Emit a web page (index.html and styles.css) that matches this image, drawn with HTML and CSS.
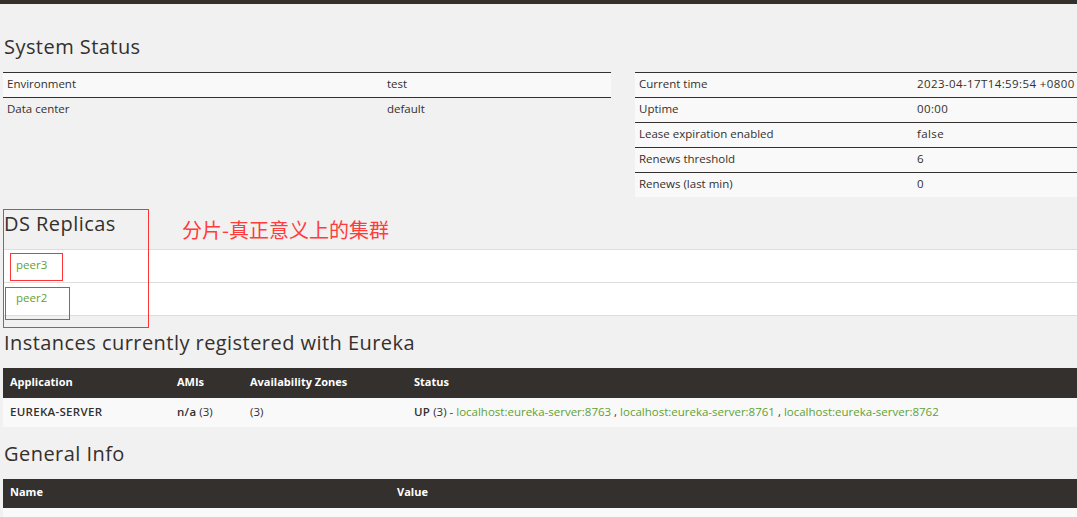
FILE: index.html
```html
<!DOCTYPE html>
<html lang="en">
<head>
<meta charset="utf-8">
<title>Eureka</title>
<link rel="stylesheet" href="styles.css">
</head>
<body>
<div class="topbar"></div>
<main class="page">
  <h2 class="heading heading-system">System Status</h2>
  <div class="status-grid">
    <table class="kv kv-left">
      <colgroup><col class="kv-left-key"><col></colgroup>
      <tbody>
        <tr><td>Environment</td><td>test</td></tr>
        <tr><td>Data center</td><td>default</td></tr>
      </tbody>
    </table>
    <table class="kv kv-right">
      <colgroup><col class="kv-right-key"><col></colgroup>
      <tbody>
        <tr><td>Current time</td><td>2023-04-17T14:59:54 +0800</td></tr>
        <tr><td>Uptime</td><td>00:00</td></tr>
        <tr><td>Lease expiration enabled</td><td>false</td></tr>
        <tr><td>Renews threshold</td><td>6</td></tr>
        <tr><td>Renews (last min)</td><td>0</td></tr>
      </tbody>
    </table>
  </div>

  <section class="replicas">
    <div class="replicas-head">
      <h2 class="heading">DS Replicas</h2>
      <span class="note">分片-真正意义上的集群</span>
    </div>
    <ul class="replica-list">
      <li><a href="#">peer3</a></li>
      <li><a href="#">peer2</a></li>
    </ul>
    <span class="mark mark-section"></span>
    <span class="mark mark-peer3"></span>
    <span class="mark mark-peer2"></span>
  </section>

  <h2 class="heading heading-instances">Instances currently registered with Eureka</h2>
  <table class="data data-instances">
    <colgroup><col class="c-app"><col class="c-ami"><col class="c-az"><col></colgroup>
    <thead>
      <tr><th>Application</th><th>AMIs</th><th>Availability Zones</th><th>Status</th></tr>
    </thead>
    <tbody>
      <tr>
        <td><b>EUREKA-SERVER</b></td>
        <td><b>n/a</b> (3)</td>
        <td>(3)</td>
        <td><b>UP</b> (3) - <a href="#">localhost:eureka-server:8763</a> , <a href="#">localhost:eureka-server:8761</a> , <a href="#">localhost:eureka-server:8762</a></td>
      </tr>
    </tbody>
  </table>

  <h2 class="heading heading-general">General Info</h2>
  <table class="data data-general">
    <colgroup><col class="c-name"><col></colgroup>
    <thead>
      <tr><th>Name</th><th>Value</th></tr>
    </thead>
    <tbody>
      <tr class="empty-row"><td></td><td></td></tr>
    </tbody>
  </table>
</main>
</body>
</html>
```
FILE: styles.css
```css
html, body {
  margin: 0;
}

body {
  background: #f1f1f1;
  color: #34302d;
  font-family: "Open Sans", "Noto Sans", sans-serif;
  font-size: 11.5px;
  overflow: hidden;
}

.topbar {
  height: 4px;
  background: #34302d;
}

.page {
  padding-left: 3px;
}

.heading {
  margin: 0;
  padding-left: 1px;
  font-family: "Open Sans", "Noto Sans", sans-serif;
  font-weight: 400;
  font-size: 20px;
  line-height: 24px;
  letter-spacing: 0.45px;
  color: #34302d;
}

.heading-system {
  margin: 31px 0 13px;
}

.status-grid {
  display: grid;
  grid-template-columns: 608px 1fr;
  column-gap: 24px;
  align-items: start;
}

.kv {
  width: 100%;
  border-collapse: separate;
  border-spacing: 0;
  table-layout: fixed;
}

.kv td {
  border-top: 1px solid #34302d;
  padding: 4px 4px 6px;
  line-height: 14px;
  white-space: nowrap;
}

.kv-left-key {
  width: 380px;
}

.kv-right-key {
  width: 278px;
}

.kv-right td:last-child {
  letter-spacing: 0.4px;
}

.kv-left tr:first-child td,
.kv-right td {
  background: #f9f9f9;
}

/* DS Replicas */
.replicas {
  position: relative;
  padding-top: 15px;
}

.replicas-head {
  display: grid;
  grid-template-columns: 179px auto;
  align-items: start;
  margin-bottom: 7px;
}

.note {
  padding-top: 6px;
  font-family: "Noto Sans CJK SC", sans-serif;
  font-size: 20px;
  line-height: 24px;
  color: #ff3c3c;
}

.replica-list {
  list-style: none;
  margin: 0;
  padding: 0;
  background: #fff;
  border-bottom: 1px solid #ddd;
}

.replica-list li {
  border-top: 1px solid #ddd;
  padding: 8px 13px 10px;
  line-height: 14px;
}

a {
  color: #5fa134;
  text-decoration: none;
}

.mark {
  position: absolute;
  box-sizing: border-box;
  outline: 1px solid #ff3333;
  outline-offset: -1px;
}

.mark-section {
  left: 0;
  top: 12px;
  width: 146px;
  height: 119px;
}

.mark-peer3 {
  left: 7px;
  top: 56px;
  width: 53px;
  height: 28px;
}

.mark-peer2 {
  left: 2px;
  top: 90px;
  width: 65px;
  height: 33px;
}

/* Data tables */
.heading-instances {
  margin: 15px 0 13px;
}

.heading-general {
  margin: 15px 0 13px;
}

.data {
  width: 100%;
  border-collapse: separate;
  border-spacing: 0;
  table-layout: fixed;
}

.data th {
  background: #34302d;
  color: #fff;
  text-align: left;
  font-weight: 700;
  font-size: 11px;
  line-height: 14px;
  padding: 7px 7px 9px;
}

.data-general th {
  padding: 6px 7px 9px;
}

.data td {
  background: #f9f9f9;
  padding: 7px 7px 8px;
  line-height: 14px;
  white-space: nowrap;
}

.data .empty-row td {
  height: 14px;
}

.data b {
  font-weight: 600;
  letter-spacing: 0.3px;
}

.c-app { width: 167px; }
.c-ami { width: 73px; }
.c-az { width: 164px; }
.c-name { width: 387px; }
```
